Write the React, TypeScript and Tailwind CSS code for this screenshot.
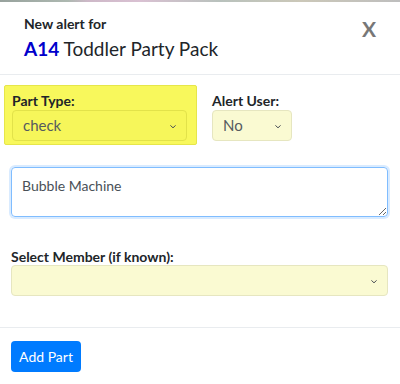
import React from "react";

const Chevron = () => (
  <svg width="8" height="10" viewBox="0 0 4 5" className="absolute right-[9px] top-1/2 -translate-y-1/2 pointer-events-none">
    <path d="M0.7 2.2 L2 3.4 L3.3 2.2" stroke="#4a4f55" strokeWidth="0.5" fill="none" />
  </svg>
);

export default function App() {
  const font = { fontFamily: "Lato, 'Open Sans', sans-serif" };
  return (
    <div className="w-[400px] h-[384px] bg-white overflow-hidden text-[#212529]" style={font}>
      <div className="h-[2px] w-full bg-[linear-gradient(90deg,#6b7a73_0%,#8a9a8f_17%,#b89ab0_22%,#c9a6bf_35%,#9aa7a0_55%,#b5b09a_75%,#a2a2a2_100%)] opacity-70" />
      <div className="h-[73px] border-b border-[#e9ecef] flex justify-between pl-[24px] pr-[24px] pt-[13px]">
        <div>
          <div className="text-[14px] font-bold leading-[18px]">New alert for</div>
          <div className="text-[19px] leading-[28px] mt-[2px]">
            <span className="font-bold text-[#0000cc]">A14</span>{" "}
            <span className="text-[#212529]">Toddler Party Pack</span>
          </div>
        </div>
        <div className="text-[21px] font-bold text-[#777] leading-[24px] mt-[2px]">X</div>
      </div>

      <div className="px-[11px] pt-[10px]">
        <div className="flex">
          <div className="ml-[-7px] w-[193px] h-[60px] bg-[#f8f85c] border border-[#e6e64a] rounded-[2px] pl-[7px] pr-[9px] pt-[6px]">
            <div className="text-[14px] font-bold leading-[17px]">Part Type:</div>
            <div className="relative mt-[1px] h-[31px] rounded-[4px] border border-[#e2e24a] bg-[#f6f65a] flex items-center pl-[10px] text-[15px] text-[#555a5f]">
              check
              <Chevron />
            </div>
          </div>
          <div className="ml-[15px] pt-[6px]">
            <div className="text-[14px] font-bold leading-[17px] mt-[1px]">Alert User:</div>
            <div className="relative mt-[1px] w-[80px] h-[31px] rounded-[4px] border border-[#e6e6c0] bg-[#fafad2] flex items-center pl-[10px] text-[15px] text-[#555a5f]">
              No
              <Chevron />
            </div>
          </div>
        </div>

        <textarea
          readOnly
          defaultValue="Bubble Machine"
          className="block mt-[22px] w-[377px] h-[50px] rounded-[4px] border border-[#80bdff] shadow-[0_0_0_2px_rgba(0,123,255,0.15)] px-[10px] pt-[7px] text-[14px] text-[#495057] outline-none resize"
          style={font}
        />

        <div className="mt-[31px] text-[14px] font-bold leading-[17px]">Select Member (if known):</div>
        <div className="relative w-[377px] h-[31px] rounded-[4px] border border-[#e6e6c0] bg-[#fafad2]">
          <Chevron />
        </div>
      </div>

      <div className="mt-[31px] border-t border-[#e9ecef] px-[11px] pt-[13px]">
        <div className="w-[70px] h-[31px] rounded-[4px] bg-[#007bff] text-white text-[14px] flex items-center justify-center">Add Part</div>
      </div>
    </div>
  );
}
